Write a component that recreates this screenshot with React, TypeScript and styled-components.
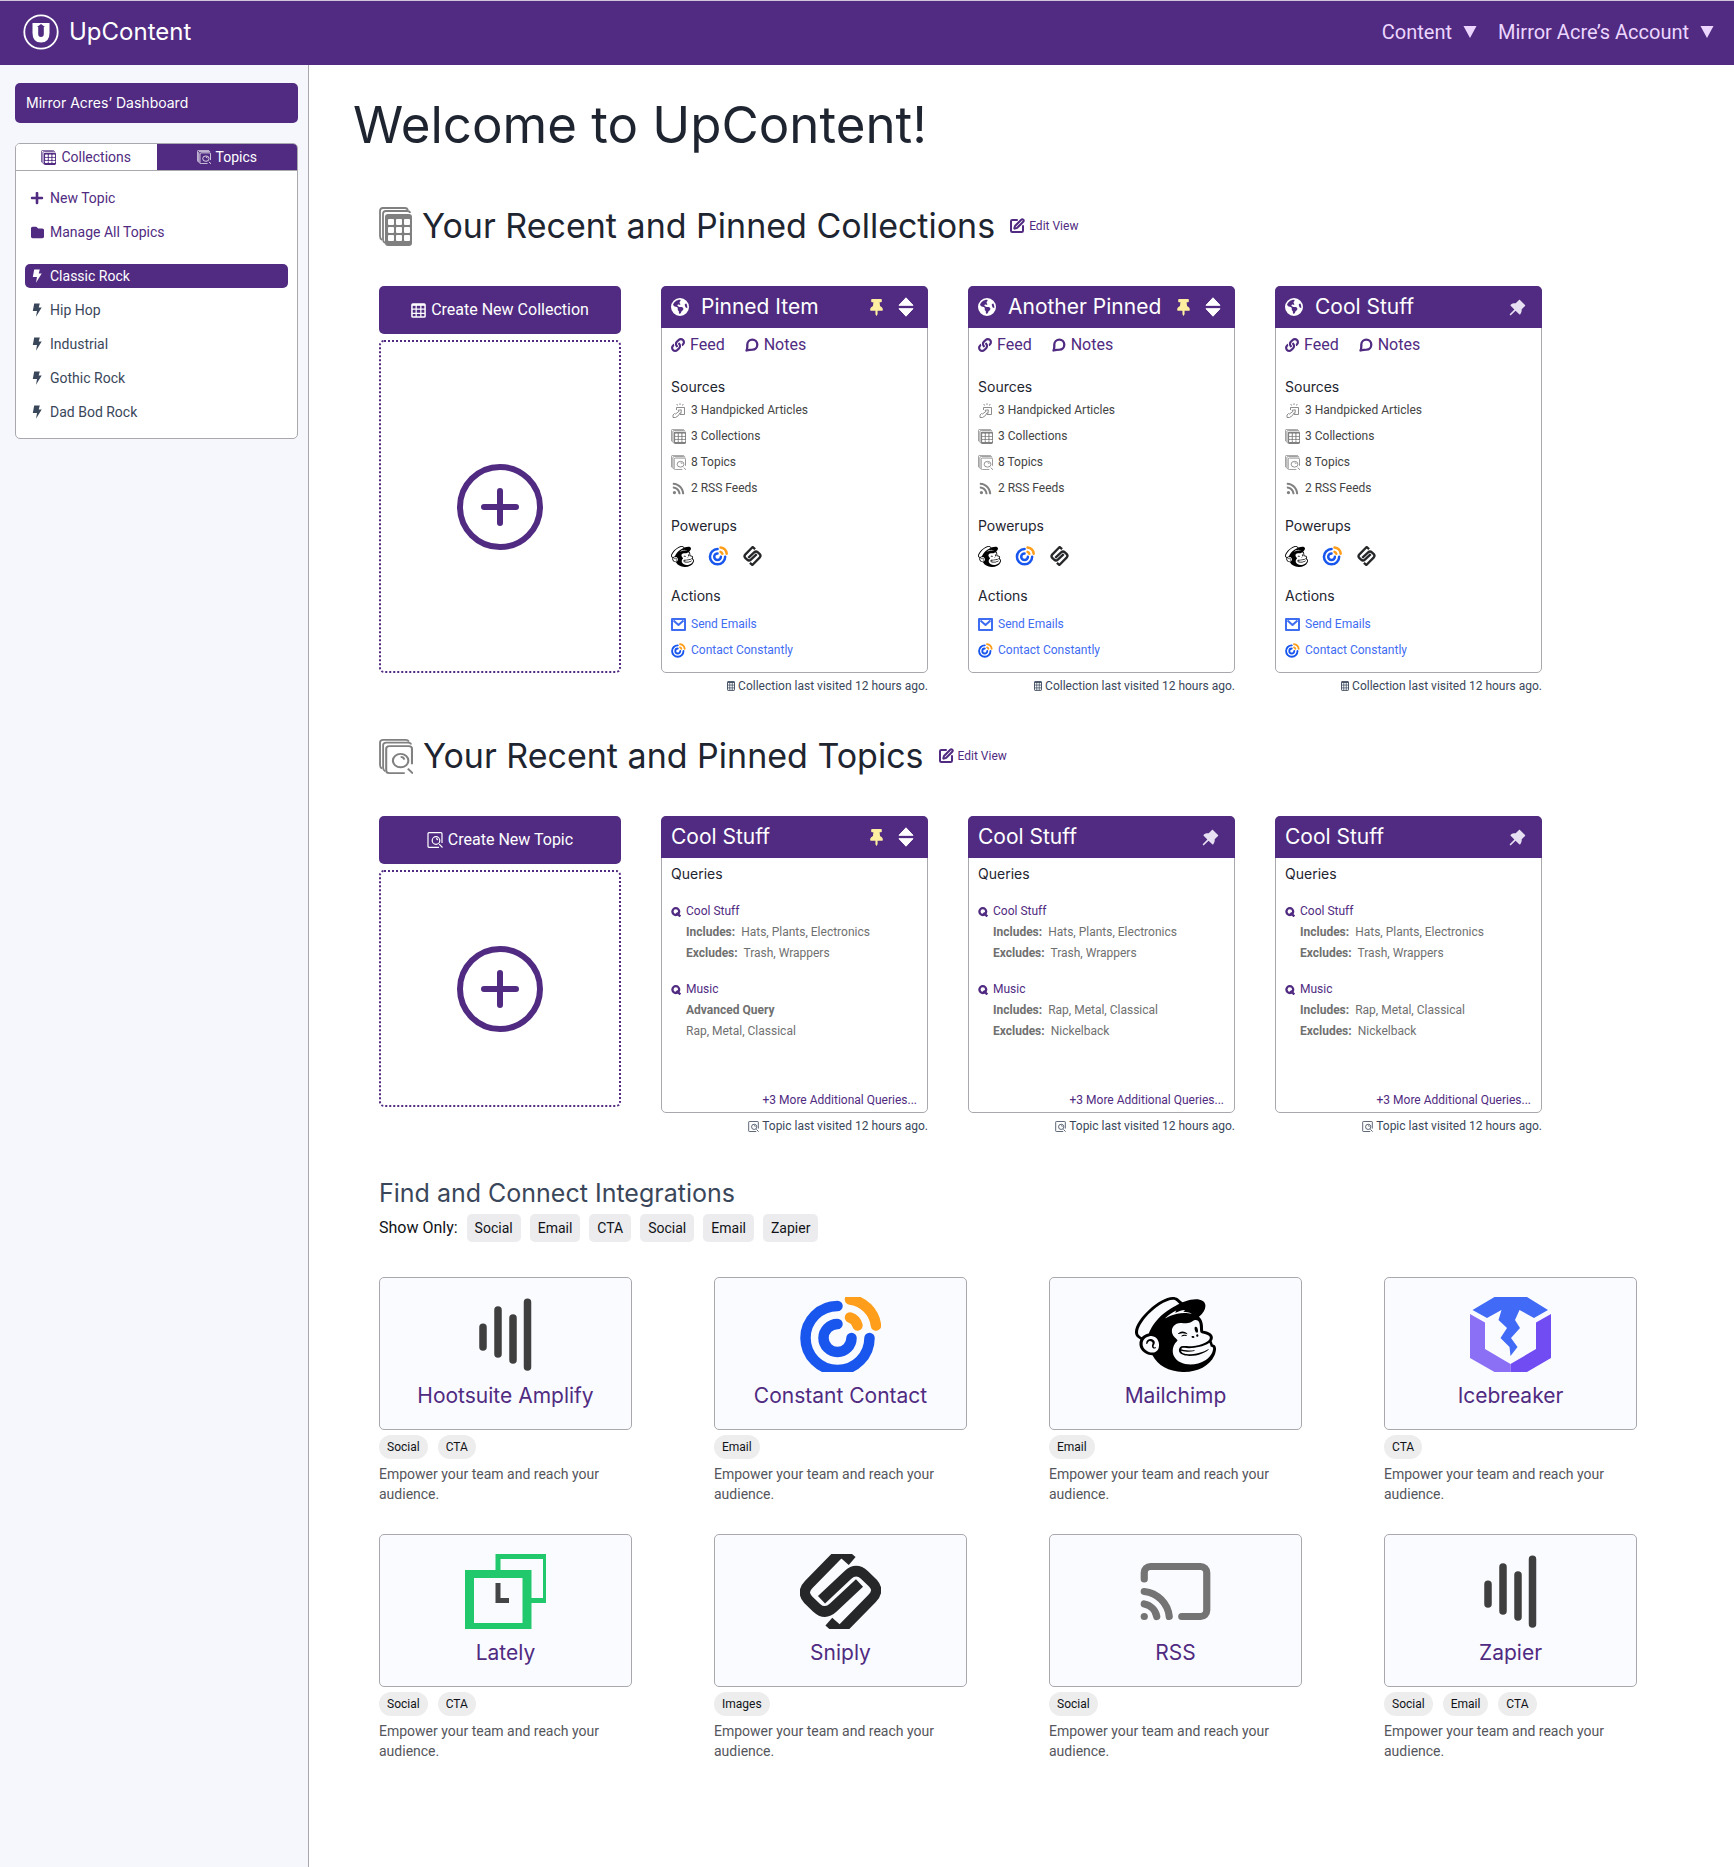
import React from "react";
import styled, { createGlobalStyle } from "styled-components";
import { Cast, SquarePen } from "lucide-react";
import { FaEarthAmericas, FaFolder } from "react-icons/fa6";
import { FaLink, FaPlus, FaRss, FaThumbtack } from "react-icons/fa";
import { AiFillPushpin } from "react-icons/ai";
import { SiMailchimp } from "react-icons/si";

const purple = "#502b81";
const ink = "#1e2530";
const slate = "#3a475a";
const line = "#a9a9ad";
const display = `Inter, "Open Sans", sans-serif`;
const body = `Roboto, "Liberation Sans", sans-serif`;

const GlobalStyle = createGlobalStyle`
  *, *::before, *::after { box-sizing: border-box; }
  body { margin: 0; background: #fff; color: ${ink}; font: 14px/20px ${body}; }
  h1, h2, h3, h4, p, ul { margin: 0; padding: 0; font-weight: 400; }
  ul { list-style: none; }
  a { color: inherit; text-decoration: none; }
  button { margin: 0; padding: 0; border: 0; background: none; color: inherit; font: inherit; cursor: pointer; }
  svg { display: block; flex: none; }
`;

/* ---------- icons ---------- */

type StackProps = { w: number; h: number; kind: "grid" | "search" };

const StackIcon = ({ w, h, kind }: StackProps) => (
  <svg width={w} height={h} viewBox="0 0 33 39" preserveAspectRatio="none" fill="none" stroke="currentColor">
    <path d="M3 33Q1 32 1 29V4Q1 1 4 1H26Q28 1 29 3" strokeWidth="1.8" />
    <path d="M6 36Q4 35 4 32V7Q4 4 7 4H28Q31 4 31 6" strokeWidth="1.8" />
    {kind === "grid" ? (
      <>
        <rect x="6" y="7" width="27" height="32" rx="3" fill="currentColor" stroke="none" />
        <g fill="#fff" stroke="none">
          {[12, 20, 28].map((y) =>
            [9, 17, 25].map((x) => <rect key={`${x}-${y}`} x={x} y={y} width="6" height="6" rx="1" />)
          )}
        </g>
      </>
    ) : (
      <>
        <path d="M25 38H10Q7 38 7 35V11Q7 8 10 8H29Q32 8 32 11V28" strokeWidth="2" />
        <circle cx="21" cy="24" r="7.5" strokeWidth="2" />
        <path d="M21 20Q24 20 24.500 23M28 33L33 38.500" strokeWidth="2" />
      </>
    )}
  </svg>
);

const GridIcon = ({ w, h }: { w: number; h: number }) => (
  <svg width={w} height={h} viewBox="0 0 16 16" preserveAspectRatio="none" fill="none" stroke="currentColor">
    <rect x="1" y="1" width="14" height="14" rx="1" strokeWidth="1.600" />
    <path d="M1 2H15" strokeWidth="2" />
    <path d="M5.500 2V15M10.500 2V15M1 6.500H15M1 11H15" strokeWidth="1.300" />
  </svg>
);

const TopicIcon = ({ size }: { size: number }) => (
  <svg width={size} height={size} viewBox="0 0 16 16" fill="none" stroke="currentColor" strokeWidth="1.200">
    <path d="M12 15.300H2Q1 15.300 1 14.300V1.700Q1 .700 2 .700H14Q15 .700 15 1.700V11" />
    <circle cx="9" cy="8.500" r="3.800" />
    <path d="M9 6.700Q10.500 6.800 10.700 8.200M12.200 12.200L15.500 15.500" />
  </svg>
);

const BoltIcon = () => (
  <svg width="10" height="14" viewBox="0 0 10 14" fill="currentColor">
    <path d="M2.200 .500H7.800L6.700 4.500H9.700L4 13.700L5 8H.800Z" />
  </svg>
);

const SortIcon = () => (
  <svg width="16" height="20" viewBox="0 0 16 20" fill="currentColor" stroke="currentColor" strokeLinejoin="round">
    <path d="M1 8.300L8 .800L15 8.300ZM1 11.700L8 19.200L15 11.700Z" />
  </svg>
);

const NoteIcon = () => (
  <svg width="14" height="14" viewBox="0 0 14 14" fill="none" stroke="currentColor" strokeWidth="2.300">
    <path d="M1.500 12.500Q2.300 11 2.300 8.500V6.500A5 5 0 1 1 7.500 11.700Q5 11.700 1.500 12.500Z" strokeLinejoin="round" />
  </svg>
);

const MailIcon = () => (
  <svg width="15" height="13" viewBox="0 0 15 13" fill="none" stroke="currentColor" strokeWidth="2" strokeLinejoin="round">
    <path d="M1 1H14V12H1ZM2.500 2.500L7.500 7L12.500 2.500" />
  </svg>
);

const SearchIcon = () => (
  <svg width="10" height="10" viewBox="0 0 10 10" fill="none" stroke="currentColor" strokeWidth="2.300">
    <circle cx="4.800" cy="4.600" r="3.400" />
    <path d="M5.500 5.700L9.300 9.500" />
  </svg>
);

const HandpickIcon = () => (
  <svg width="14" height="15" viewBox="0 0 14 15" fill="none" stroke="currentColor" strokeWidth=".9">
    <path d="M4.500 7V4.500H12.500V11.500H8" />
    <path d="M5.500 2.500L4.800 1M8 2V.300M10.500 2.500L11.200 1" />
    <path d="M9.300 6.800L6 7.300L7 8.300L3.500 11L2.500 10.500L1 12V14.500H3.500L6.500 12.500L8 9.800L9 10.500Z" />
  </svg>
);

const CaretDown = () => (
  <svg width="14" height="12" viewBox="0 0 14 12" fill="currentColor">
    <path d="M.500 0H13.500L7 12Z" />
  </svg>
);

const CirclePlusIcon = () => (
  <svg width="86" height="86" viewBox="0 0 86 86" fill="none" stroke="currentColor" strokeWidth="6" strokeLinecap="round">
    <circle cx="43" cy="43" r="40" />
    <path d="M43 27V59M27 43H59" />
  </svg>
);

const BrandMark = () => (
  <svg width="36" height="36" viewBox="0 0 36 36" fill="none">
    <circle cx="18" cy="18" r="16.700" stroke="#fff" strokeWidth="1.800" />
    <path d="M9.500 9H26.500V19Q26.500 28.500 18 28.500Q9.500 28.500 9.500 19Z" fill="#fff" />
    <path d="M18 10L22 13H20.800V20Q20.800 23 18 23Q15.200 23 15.200 20V13H14Z" fill={purple} />
  </svg>
);

const Mailchimp = () => (
  <SiMailchimp color="#000" viewBox="0.7 0 22.6 24" preserveAspectRatio="none" />
);

const ConstantContact = ({ crop }: { crop?: boolean }) => (
  <svg viewBox={crop ? "0 0 81 75" : "0 -4 83 84"} fill="none" strokeLinecap="round" strokeWidth="10.500">
    <g stroke="#1856ed">
      <path d="M37.500 9A32 32 0 1 0 69.500 41" />
      <path d="M37.500 27A14 14 0 1 0 51.500 41" />
    </g>
    <g stroke="#ff9e1a">
      <path d="M50 2.500A30 30 0 0 1 76 28.500" />
      <path d="M50 20.500Q56 22.500 57.500 28.500" />
    </g>
  </svg>
);

const Sniply = ({ crop }: { crop?: boolean }) => (
  <svg viewBox={crop ? "15.500 26 243 225" : "12 4 250 268"} fill="none" stroke="#262729" strokeWidth="31">
    <path d="M172 47L139 18L42 117Q19 140 40 163L65 187Q90 210 115 187L194 113" />
    <path d="M102 229L135 258L232 159Q255 136 234 113L209 89Q184 66 159 89L80 163" />
  </svg>
);

const Bars = () => (
  <svg viewBox="0 0 81 75" stroke="#3f3f3f" strokeWidth="7.500" strokeLinecap="round">
    <path d="M18 30.300V50M33 13V57M48 21V63M62.500 5.300V70" />
  </svg>
);

const Icebreaker = () => (
  <svg viewBox="0 0 81 75">
    <path
      fill="#416bf6"
      d="M24.500 0H57L78 13L64 21L49.500 13L45 23L50 31L41 41L47.500 50L40.500 59L39.500 50L30.500 41L37 31L28.500 23L31.500 13L17 21L2.500 13Z"
    />
    <path fill="#8b70f6" d="M0 17L15 25.500V52L40.500 67V75H24.500L0 61Z" />
    <path fill="#714cf3" d="M81 17L66 25.500V52L40.500 67V75H57L81 61Z" />
  </svg>
);

const Lately = () => (
  <svg viewBox="0 0 81 75">
    <path fill="#22c86c" fillRule="evenodd" d="M30.500 0H81V49H66V44H78V5H35.500V17H30.500Z" />
    <path fill="#22c86c" fillRule="evenodd" d="M0 16H66.500V75H0ZM9 24V69H57.500V24Z" />
    <path fill="#444547" d="M30.500 29H35.500V44H44V49H30.500Z" />
  </svg>
);

/* ---------- page frame ---------- */

const Page = styled.div`
  min-height: 100vh;
  display: flex;
  flex-direction: column;
`;

const TopBar = styled.header`
  display: flex;
  align-items: center;
  justify-content: space-between;
  height: 65px;
  padding: 0 20px 3px 23px;
  border-top: 1px solid #cfc6dc;
  background: ${purple};
`;

const Brand = styled.a`
  display: flex;
  align-items: center;
  gap: 10px;
  color: #fff;
  font: 24px/32px ${display};
`;

const AccountNav = styled.nav`
  display: flex;
  gap: 21px;
`;

const NavButton = styled.button`
  display: flex;
  align-items: center;
  gap: 11px;
  color: #ecd6ff;
  font-size: 20px;
  line-height: 24px;
`;

const Columns = styled.div`
  flex: 1;
  display: flex;
`;

const Sidebar = styled.aside`
  flex: none;
  width: 309px;
  padding: 18px 10px 24px 15px;
  border-right: 1px solid ${line};
  background: #f5f7fd;
`;

const DashboardLink = styled.a`
  display: block;
  padding: 10px 11px;
  border-radius: 5px;
  background: ${purple};
  color: #fff;
  font: 14px/20px ${display};
`;

const Panel = styled.section`
  margin-top: 20px;
  border: 1px solid ${line};
  border-radius: 5px;
  background: #fff;
  overflow: hidden;
`;

const Tabs = styled.div`
  display: grid;
  grid-template-columns: 1fr 1fr;
  border-bottom: 1px solid ${line};
`;

const Tab = styled.button<{ $on?: boolean }>`
  display: flex;
  align-items: center;
  justify-content: center;
  gap: 5px;
  height: 26px;
  background: ${(p) => (p.$on ? purple : "#fff")};
  color: ${(p) => (p.$on ? "#fff" : purple)};
`;

const SideList = styled.ul`
  display: flex;
  flex-direction: column;
  gap: 10px;
  padding: 15px 9px 0;

  & + & {
    padding: 20px 9px 14px;
  }
`;

const SideLink = styled.a<{ $tone: "action" | "plain" | "on" }>`
  display: flex;
  align-items: center;
  gap: 6px;
  height: 24px;
  padding: 0 5px;
  border-radius: 5px;
  background: ${(p) => (p.$tone === "on" ? purple : "transparent")};
  color: ${(p) => (p.$tone === "on" ? "#fff" : p.$tone === "action" ? purple : slate)};
`;

const SideIcon = styled.span`
  display: flex;
  justify-content: center;
  width: 14px;
`;

const Main = styled.main`
  flex: 1;
  min-width: 0;
  padding: 28px 97px 100px 44px;
`;

const PageTitle = styled.h1`
  font: 51px/64px ${display};
`;

const Section = styled.section<{ $top: number }>`
  margin: ${(p) => p.$top}px 0 0 26px;
`;

const SectionHead = styled.div`
  display: flex;
  align-items: center;
  height: 40px;
  color: #808080;
`;

const SectionTitle = styled.h2`
  margin: 0 14px 0 10px;
  color: ${ink};
  font: 34px/40px ${display};
`;

const EditButton = styled.button`
  display: flex;
  align-items: center;
  gap: 4px;
  color: ${purple};
  font-size: 12px;
`;

const CardRow = styled.div`
  display: grid;
  grid-template-columns: 242px repeat(3, minmax(0, 1fr));
  gap: 40px;
  align-items: start;
  margin: 40px 95px 0 0;
`;

/* ---------- create tiles ---------- */

const CreateColumn = styled.div`
  display: flex;
  flex-direction: column;
  gap: 6px;
`;

const CreateButton = styled.button`
  display: flex;
  align-items: center;
  justify-content: center;
  gap: 5px;
  height: 48px;
  border-radius: 5px;
  background: ${purple};
  color: #fff;
  font-size: 16px;
`;

const DropTile = styled.button<{ $h: number }>`
  display: flex;
  align-items: center;
  justify-content: center;
  height: ${(p) => p.$h}px;
  border: 2px dotted ${purple};
  border-radius: 5px;
  color: ${purple};
`;

/* ---------- cards ---------- */

const Card = styled.article<{ $h: number }>`
  display: flex;
  flex-direction: column;
  min-height: ${(p) => p.$h}px;
  border: 1px solid ${line};
  border-radius: 5px;
`;

const CardHead = styled.header`
  display: flex;
  align-items: center;
  height: 42px;
  margin: -1px -1px 0;
  padding: 0 14px 0 10px;
  border-radius: 5px 5px 0 0;
  background: ${purple};
  color: #fff;

  svg + h3 {
    margin-left: 12px;
  }
`;

const CardTitle = styled.h3`
  flex: 1;
  white-space: nowrap;
  font: 21px/28px ${display};
`;

const HeadButton = styled.button<{ $color: string }>`
  margin-left: 13px;
  color: ${(p) => p.$color};
`;

const CardBody = styled.div<{ $top: number }>`
  flex: 1;
  display: flex;
  flex-direction: column;
  padding: ${(p) => p.$top}px 9px 8px;
`;

const CardLinks = styled.div`
  display: flex;
  gap: 20px;
  color: ${purple};
  font-size: 16px;
`;

const IconText = styled.a`
  display: flex;
  align-items: center;
  gap: 5px;
`;

const Label = styled.h4<{ $top?: number }>`
  margin-top: ${(p) => p.$top ?? 0}px;
  color: ${ink};
  font: 14px/20px ${display};
`;

const LineList = styled.ul<{ $top: number; $color: string }>`
  display: flex;
  flex-direction: column;
  gap: 6px;
  margin-top: ${(p) => p.$top}px;
  color: ${(p) => p.$color};
  font-size: 12px;
`;

const LineIcon = styled.span`
  display: flex;
  justify-content: center;
  width: 15px;
  color: #808080;

  a > & {
    color: #3f6df2;
  }
`;

const Powerups = styled.div`
  display: flex;
  align-items: center;
  gap: 14px;
  height: 22px;
  margin-top: 9px;
`;

const LogoBox = styled.span<{ $w: number; $h: number }>`
  display: flex;

  svg {
    width: ${(p) => p.$w}px;
    height: ${(p) => p.$h}px;
  }
`;

const Visited = styled.p`
  display: flex;
  align-items: center;
  justify-content: flex-end;
  gap: 3px;
  margin-top: 3px;
  color: ${slate};
  font-size: 12px;
  white-space: nowrap;
`;

const Query = styled.div`
  margin-top: 17px;
  color: #707070;
  font-size: 12px;
  line-height: 21px;

  & + & {
    margin-top: 15px;
  }
`;

const QueryName = styled.a`
  display: flex;
  align-items: center;
  gap: 5px;
  color: ${purple};
`;

const QueryLine = styled.p`
  padding-left: 15px;

  b {
    margin-right: 3px;
  }
`;

const MoreLink = styled.a`
  align-self: flex-end;
  margin: auto 1px -6px 0;
  color: ${purple};
  font-size: 12px;
`;

/* ---------- integrations ---------- */

const IntegrationsTitle = styled.h2`
  color: ${slate};
  font: 25px/36px ${display};
`;

const Filters = styled.div`
  display: flex;
  align-items: center;
  gap: 9px;
  margin-top: 3px;
  color: #111318;
  font-size: 16px;
`;

const FilterChip = styled.button`
  height: 28px;
  padding: 0 8px;
  border-radius: 5px;
  background: #ececee;
  font-size: 14px;
`;

const IntegrationGrid = styled.div`
  display: grid;
  grid-template-columns: repeat(4, minmax(0, 1fr));
  gap: 30px 82px;
  margin-top: 35px;
`;

const Tile = styled.a`
  display: flex;
  flex-direction: column;
  align-items: center;
  height: 153px;
  padding-top: 19px;
  border: 1px solid ${line};
  border-radius: 5px;
  background: #fafbff;
`;

const TileTitle = styled.h3`
  margin-top: 10px;
  color: ${purple};
  white-space: nowrap;
  font: 21px/28px ${display};
`;

const Tags = styled.ul`
  display: flex;
  gap: 10px;
  margin: 5px 0;
`;

const Tag = styled.li`
  padding: 2px 8px;
  border-radius: 12px;
  background: #ededed;
  color: #111318;
  font-size: 12px;
`;

const Blurb = styled.p`
  max-width: 240px;
  color: #55565c;
`;

/* ---------- data ---------- */

const topics = ["Classic Rock", "Hip Hop", "Industrial", "Gothic Rock", "Dad Bod Rock"];

const collections = [
  { title: "Pinned Item", pinned: true },
  { title: "Another Pinned", pinned: true },
  { title: "Cool Stuff", pinned: false },
];

const includesMusic: [string, string][] = [
  ["Includes:", "Rap, Metal, Classical"],
  ["Excludes:", "Nickelback"],
];

const topicCards: { pinned: boolean; music: [string, string][] }[] = [
  { pinned: true, music: [["Advanced Query", ""], ["", "Rap, Metal, Classical"]] },
  { pinned: false, music: includesMusic },
  { pinned: false, music: includesMusic },
];

const integrations = [
  { name: "Hootsuite Amplify", logo: <Bars />, tags: ["Social", "CTA"] },
  { name: "Constant Contact", logo: <ConstantContact crop />, tags: ["Email"] },
  { name: "Mailchimp", logo: <Mailchimp />, tags: ["Email"] },
  { name: "Icebreaker", logo: <Icebreaker />, tags: ["CTA"] },
  { name: "Lately", logo: <Lately />, tags: ["Social", "CTA"] },
  { name: "Sniply", logo: <Sniply crop />, tags: ["Images"] },
  { name: "RSS", logo: <Cast color="#747474" strokeWidth={2.3} />, tags: ["Social"] },
  { name: "Zapier", logo: <Bars />, tags: ["Social", "Email", "CTA"] },
];

const PinControls = ({ pinned }: { pinned: boolean }) =>
  pinned ? (
    <>
      <HeadButton $color="#fdeea0" aria-label="Unpin"><FaThumbtack size={17} /></HeadButton>
      <HeadButton $color="#fff" aria-label="Reorder"><SortIcon /></HeadButton>
    </>
  ) : (
    <HeadButton $color="#e6e0f2" aria-label="Pin"><AiFillPushpin size={21} /></HeadButton>
  );

const CollectionCard = ({ title, pinned }: { title: string; pinned: boolean }) => (
  <div>
    <Card $h={387}>
      <CardHead>
        <FaEarthAmericas size={18} />
        <CardTitle>{title}</CardTitle>
        <PinControls pinned={pinned} />
      </CardHead>
      <CardBody $top={7}>
        <CardLinks>
          <IconText href="#feed"><FaLink size={14} />Feed</IconText>
          <IconText href="#notes"><NoteIcon />Notes</IconText>
        </CardLinks>
        <Label $top={22}>Sources</Label>
        <LineList $top={3} $color="#444">
          <IconText as="li"><LineIcon><HandpickIcon /></LineIcon>3 Handpicked Articles</IconText>
          <IconText as="li"><LineIcon><StackIcon w={15} h={15} kind="grid" /></LineIcon>3 Collections</IconText>
          <IconText as="li"><LineIcon><StackIcon w={15} h={15} kind="search" /></LineIcon>8 Topics</IconText>
          <IconText as="li"><LineIcon><FaRss size={13} /></LineIcon>2 RSS Feeds</IconText>
        </LineList>
        <Label $top={18}>Powerups</Label>
        <Powerups>
          <LogoBox $w={23} $h={21}><Mailchimp /></LogoBox>
          <LogoBox $w={21} $h={20}><ConstantContact /></LogoBox>
          <LogoBox $w={19} $h={20}><Sniply /></LogoBox>
        </Powerups>
        <Label $top={19}>Actions</Label>
        <LineList $top={8} $color="#3f6df2">
          <li><IconText href="#send"><LineIcon><MailIcon /></LineIcon>Send Emails</IconText></li>
          <li>
            <IconText href="#contact">
              <LogoBox $w={15} $h={15}><ConstantContact /></LogoBox>Contact Constantly
            </IconText>
          </li>
        </LineList>
      </CardBody>
    </Card>
    <Visited><GridIcon w={8} h={10} />Collection last visited 12 hours ago.</Visited>
  </div>
);

const QueryBlock = ({ name, lines }: { name: string; lines: [string, string][] }) => (
  <Query>
    <QueryName href="#query"><SearchIcon />{name}</QueryName>
    {lines.map(([key, value]) => (
      <QueryLine key={key + value}>{key && <b>{key}</b>} {value}</QueryLine>
    ))}
  </Query>
);

export default function App() {
  return (
    <Page>
      <GlobalStyle />
      <TopBar>
        <Brand href="#home"><BrandMark />UpContent</Brand>
        <AccountNav>
          <NavButton>Content <CaretDown /></NavButton>
          <NavButton>Mirror Acre’s Account <CaretDown /></NavButton>
        </AccountNav>
      </TopBar>
      <Columns>
        <Sidebar>
          <DashboardLink href="#dashboard">Mirror Acres’ Dashboard</DashboardLink>
          <Panel>
            <Tabs>
              <Tab><StackIcon w={15} h={15} kind="grid" />Collections</Tab>
              <Tab $on><StackIcon w={14} h={14} kind="search" />Topics</Tab>
            </Tabs>
            <SideList>
              <li><SideLink href="#new" $tone="action"><SideIcon><FaPlus size={14} /></SideIcon>New Topic</SideLink></li>
              <li><SideLink href="#manage" $tone="action"><SideIcon><FaFolder size={13} /></SideIcon>Manage All Topics</SideLink></li>
            </SideList>
            <SideList>
              {topics.map((t, i) => (
                <li key={t}>
                  <SideLink href="#topic" $tone={i === 0 ? "on" : "plain"}><SideIcon><BoltIcon /></SideIcon>{t}</SideLink>
                </li>
              ))}
            </SideList>
          </Panel>
        </Sidebar>
        <Main>
          <PageTitle>Welcome to UpContent!</PageTitle>

          <Section $top={49}>
            <SectionHead>
              <StackIcon w={33} h={39} kind="grid" />
              <SectionTitle>Your Recent and Pinned Collections</SectionTitle>
              <EditButton><SquarePen size={16} strokeWidth={3} />Edit View</EditButton>
            </SectionHead>
            <CardRow>
              <CreateColumn>
                <CreateButton><GridIcon w={15} h={15} />Create New Collection</CreateButton>
                <DropTile $h={333} aria-label="Add collection"><CirclePlusIcon /></DropTile>
              </CreateColumn>
              {collections.map((c) => <CollectionCard key={c.title} {...c} />)}
            </CardRow>
          </Section>

          <Section $top={40}>
            <SectionHead>
              <StackIcon w={34} h={35} kind="search" />
              <SectionTitle>Your Recent and Pinned Topics</SectionTitle>
              <EditButton><SquarePen size={16} strokeWidth={3} />Edit View</EditButton>
            </SectionHead>
            <CardRow>
              <CreateColumn>
                <CreateButton><TopicIcon size={16} />Create New Topic</CreateButton>
                <DropTile $h={237} aria-label="Add topic"><CirclePlusIcon /></DropTile>
              </CreateColumn>
              {topicCards.map((t, i) => (
                <div key={i}>
                  <Card $h={297}>
                    <CardHead>
                      <CardTitle>Cool Stuff</CardTitle>
                      <PinControls pinned={t.pinned} />
                    </CardHead>
                    <CardBody $top={6}>
                      <Label>Queries</Label>
                      <QueryBlock name="Cool Stuff" lines={[["Includes:", "Hats, Plants, Electronics"], ["Excludes:", "Trash, Wrappers"]]} />
                      <QueryBlock name="Music" lines={t.music} />
                      <MoreLink href="#more">+3 More Additional Queries...</MoreLink>
                    </CardBody>
                  </Card>
                  <Visited><TopicIcon size={11} />Topic last visited 12 hours ago.</Visited>
                </div>
              ))}
            </CardRow>
          </Section>

          <Section $top={39}>
            <IntegrationsTitle>Find and Connect Integrations</IntegrationsTitle>
            <Filters>
              <span>Show Only:</span>
              {["Social", "Email", "CTA", "Social", "Email", "Zapier"].map((f, i) => (
                <FilterChip key={i}>{f}</FilterChip>
              ))}
            </Filters>
            <IntegrationGrid>
              {integrations.map((it) => (
                <article key={it.name}>
                  <Tile href="#integration">
                    <LogoBox $w={81} $h={75}>{it.logo}</LogoBox>
                    <TileTitle>{it.name}</TileTitle>
                  </Tile>
                  <Tags>{it.tags.map((t) => <Tag key={t}>{t}</Tag>)}</Tags>
                  <Blurb>Empower your team and reach your audience.</Blurb>
                </article>
              ))}
            </IntegrationGrid>
          </Section>
        </Main>
      </Columns>
    </Page>
  );
}
